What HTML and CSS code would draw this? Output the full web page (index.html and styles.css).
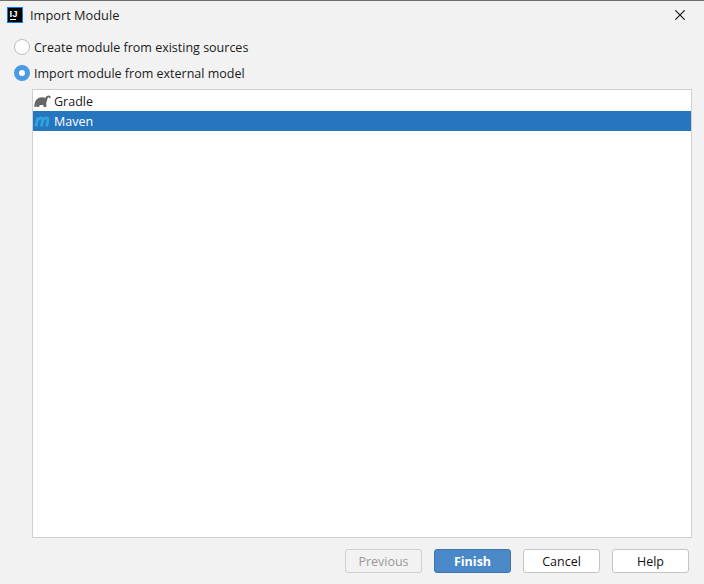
FILE: index.html
```html
<!DOCTYPE html>
<html lang="en">
<head>
<meta charset="utf-8">
<title>Import Module</title>
<link rel="stylesheet" href="styles.css">
</head>
<body>
<div class="dialog">
  <header class="titlebar">
    <svg class="app-icon" width="16" height="16" viewBox="0 0 16 16">
      <rect x="0.5" y="0.5" width="15" height="15" fill="#000" stroke="#087cfa"/>
      <rect x="3" y="12" width="6" height="1" fill="#fff"/>
      <text class="app-letters" x="2.500" y="9.500">IJ</text>
    </svg>
    <span class="title">Import Module</span>
    <svg class="close" width="10" height="10" viewBox="0 0 10 10">
      <path d="M0.300 0.300l9.400 9.400M9.700 0.300L0.300 9.700" stroke="#111" stroke-width="1.100" fill="none"/>
    </svg>
  </header>
  <main class="content">
    <label class="radio-row"><span class="radio"></span>Create module from existing sources</label>
    <label class="radio-row"><span class="radio radio-on"></span>Import module from external model</label>
    <ul class="list">
      <li class="item">
        <svg class="item-icon" width="17" height="13" viewBox="0 0 17 13">
          <path fill="#666" d="M0.300 12C0.300 6.500 2.800 2.200 7.800 2.200 9.500 2.200 10.500 2.600 11.200 3.200 11.800 1.500 13 .5 14.600 .5 16 .5 16.900 1.500 16.700 3L15.300 3C15 2.200 14.400 2.200 13.900 2.800 13.200 3.700 13.400 5.500 12.400 7.300L12.300 12 9.600 12 9.200 9.700C8 10 6.800 10 5.700 9.700L5.200 12 2.800 12 2.500 9.500 2.200 12Z"/>
        </svg>
        Gradle
      </li>
      <li class="item item-selected">
        <svg class="item-icon" width="17" height="13" viewBox="0 0 17 13">
          <path fill="none" stroke="#2fa3dc" stroke-width="2.900" d="M2 11.500L3.700 2.500M3.400 4.800Q6.400 2.400 8 3.200 9 3.800 8.600 5.500L7.400 11.500M8.600 4.800Q11.600 2.400 13.300 3.200 14.300 3.800 13.900 5.500L12.700 11.500"/>
        </svg>
        Maven
      </li>
    </ul>
  </main>
  <footer class="actions">
    <button class="btn btn-disabled" type="button">Previous</button>
    <button class="btn btn-primary" type="button">Finish</button>
    <button class="btn" type="button">Cancel</button>
    <button class="btn" type="button">Help</button>
  </footer>
</div>
</body>
</html>
```
FILE: styles.css
```css
* { box-sizing: border-box; }
html, body { margin: 0; height: 100%; }
body {
  background: #f2f2f2;
  color: #1a1a1a;
  font-family: "Open Sans", "Noto Sans", sans-serif;
  font-size: 12.5px;
}
.dialog {
  width: 704px;
  height: 584px;
  display: flex;
  flex-direction: column;
  border-top: 1px solid #707070;
}
.titlebar {
  display: flex;
  align-items: center;
  height: 28px;
  padding: 0 19px 0 7px;
  flex: none;
}
.app-icon { margin-right: 7px; flex: none; }
.app-letters {
  font-family: "Liberation Sans", sans-serif;
  font-size: 9.500px;
  font-weight: 700;
  fill: #fff;
}
.title { flex: 1; font-size: 12.8px; }
.content {
  flex: 1;
  min-height: 0;
  display: flex;
  flex-direction: column;
  padding: 5px 12px 0 14px;
}
.radio-row {
  display: flex;
  align-items: center;
  height: 26px;
  gap: 4px;
}
.radio {
  width: 16px;
  height: 16px;
  border-radius: 50%;
  background: #fff;
  border: 1px solid #bdbdbd;
  flex: none;
}
.radio-on {
  background: #fff;
  border: 5px solid #4a9ae6;
}
.list {
  list-style: none;
  margin: 3px 0 0 18px;
  padding: 1px 0 0;
  flex: 1;
  min-height: 0;
  background: #fff;
  border: 1px solid #d0d0d0;
}
.item {
  display: flex;
  align-items: center;
  height: 20px;
  padding-left: 1px;
  gap: 3px;
}
.item-selected {
  background: #2675bf;
  color: #fff;
}
.item-icon { flex: none; }
.actions {
  flex: none;
  display: flex;
  justify-content: flex-end;
  gap: 12px;
  padding: 11px 15px 11px 0;
}
.btn {
  width: 77px;
  height: 24px;
  padding: 0;
  font: inherit;
  color: #111;
  background: #fff;
  border: 1px solid #c4c4c4;
  border-radius: 3px;
}
.btn-disabled {
  background: #f2f2f2;
  color: #999;
  border-color: #cfcfcf;
}
.btn-primary {
  background: #4a88c7;
  color: #fff;
  font-weight: 700;
  border-color: #3d75ad;
}
```
